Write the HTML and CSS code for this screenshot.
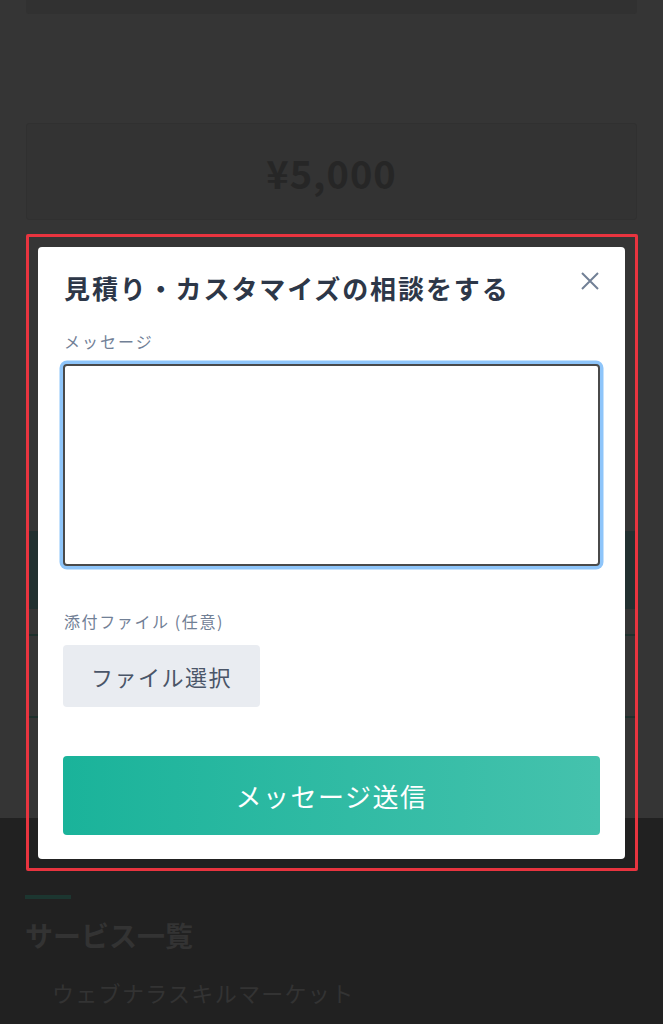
FILE: index.html
```html
<!DOCTYPE html>
<html lang="ja">
<head>
  <meta charset="UTF-8">
  <title>見積り・カスタマイズの相談</title>
  <link rel="stylesheet" href="styles.css">
</head>
<body>
<div class="page">
  <div class="page__inner">
    <div class="top-card"></div>
    <div class="price-card">
      <span class="price-card__price">¥5,000</span>
    </div>
    <div class="under-band"></div>
    <div class="under-line under-line--first"></div>
    <div class="under-line"></div>
  </div>
  <footer class="footer">
    <div class="footer__accent"></div>
    <h2 class="footer__title">サービス一覧</h2>
    <p class="footer__link">ウェブナラスキルマーケット</p>
  </footer>
</div>

<div class="modal">
  <div class="modal__highlight">
    <div class="modal__container" role="dialog" aria-modal="true" aria-labelledby="modal-title">
      <header class="modal__header">
        <h2 class="modal__title" id="modal-title">見積り・カスタマイズの相談をする</h2>
        <button class="modal__close" aria-label="閉じる">
          <svg width="20" height="20" viewBox="0 0 20 20">
            <path d="M2 2 L18 18 M18 2 L2 18" stroke="#718096" stroke-width="2" fill="none"/>
          </svg>
        </button>
      </header>
      <form class="modal__form">
        <label class="modal__label" for="message">メッセージ</label>
        <textarea id="message" class="modal__textarea"></textarea>
        <label class="modal__label modal__label--file">添付ファイル (任意)</label>
        <button type="button" class="modal__file-btn">ファイル選択</button>
        <button type="submit" class="modal__submit">メッセージ送信</button>
      </form>
    </div>
  </div>
</div>
</body>
</html>
```

FILE: styles.css
```css
body {
  margin: 0;
  padding: 0;
  background: #353535;
  font-family: "Noto Sans CJK JP", "Noto Sans", sans-serif;
  height: 1024px;
  overflow: hidden;
}
.page__inner {
  padding: 0 26px;
  height: 818px;
}
.top-card {
  height: 14px;
  background: #313131;
  border-radius: 0 0 3px 3px;
}
.price-card {
  margin-top: 109px;
  height: 95px;
  background: #333333;
  border: 1px solid #303030;
  border-radius: 3px;
  display: flex;
  align-items: center;
  justify-content: center;
}
.price-card__price {
  font-size: 38px;
  font-weight: 700;
  color: #262626;
  letter-spacing: 1px;
  margin-top: 2px;
}
.under-band {
  margin-top: 311px;
  height: 78px;
  background: #223030;
}
.under-line {
  margin-top: 80px;
  height: 2px;
  background: #1e302c;
}
.under-line--first {
  margin-top: 25px;
}
.footer {
  background: #212121;
  height: 206px;
  padding: 77px 25px 0;
  box-sizing: border-box;
}
.footer__accent {
  width: 46px;
  height: 4px;
  background: #1c3630;
}
.footer__title {
  margin: 16px 0 0;
  font-size: 28px;
  line-height: 40px;
  font-weight: 700;
  color: #333333;
}
.footer__link {
  margin: 21px 0 0 27px;
  font-size: 22px;
  line-height: 32px;
  color: #333333;
  letter-spacing: 1.3px;
}

/* modal */
.modal {
  position: fixed;
  top: 0;
  left: 0;
  right: 0;
  bottom: 0;
  padding: 234px 0 0 26px;
}
.modal__highlight {
  border: 3px solid #e8343f;
  border-radius: 2px;
  padding: 10px 10px 9px 9px;
  width: 587px;
}
.modal__container {
  background: #ffffff;
  border-radius: 4px;
  padding: 23px 25px 24px;
}
.modal__header {
  display: flex;
  justify-content: space-between;
  align-items: flex-start;
}
.modal__title {
  margin: 0;
  padding-left: 1px;
  font-size: 26px;
  line-height: 36px;
  font-weight: 700;
  color: #2d3748;
  letter-spacing: 1.9px;
}
.modal__close {
  background: none;
  border: none;
  padding: 0;
  margin-top: 1px;
  width: 20px;
  height: 20px;
  cursor: pointer;
}
.modal__form {
  display: flex;
  flex-direction: column;
  align-items: flex-start;
}
.modal__label {
  margin-top: 23px;
  padding-left: 1px;
  font-size: 16px;
  line-height: 24px;
  color: #718096;
  letter-spacing: 2px;
}
.modal__label--file {
  margin-top: 43px;
  letter-spacing: 1.6px;
}
.modal__textarea {
  display: block;
  margin-top: 11px;
  width: 100%;
  height: 202px;
  box-sizing: border-box;
  border: 2px solid #4a4a4a;
  border-radius: 4px;
  box-shadow: 0 0 0 3.5px #8ec5fa;
  resize: none;
  outline: none;
  font-family: inherit;
}
.modal__file-btn {
  margin-top: 12px;
  width: 197px;
  height: 62px;
  background: #e9ecf1;
  border: none;
  border-radius: 4px;
  font-family: inherit;
  font-size: 22px;
  color: #4a5568;
  letter-spacing: 1.5px;
  cursor: pointer;
}
.modal__submit {
  margin-top: 49px;
  width: 100%;
  height: 79px;
  background: linear-gradient(to right, #1ab39a, #45c2ad);
  border: none;
  border-radius: 4px;
  font-family: inherit;
  font-size: 26px;
  color: #ffffff;
  letter-spacing: 1.5px;
  cursor: pointer;
}
```
